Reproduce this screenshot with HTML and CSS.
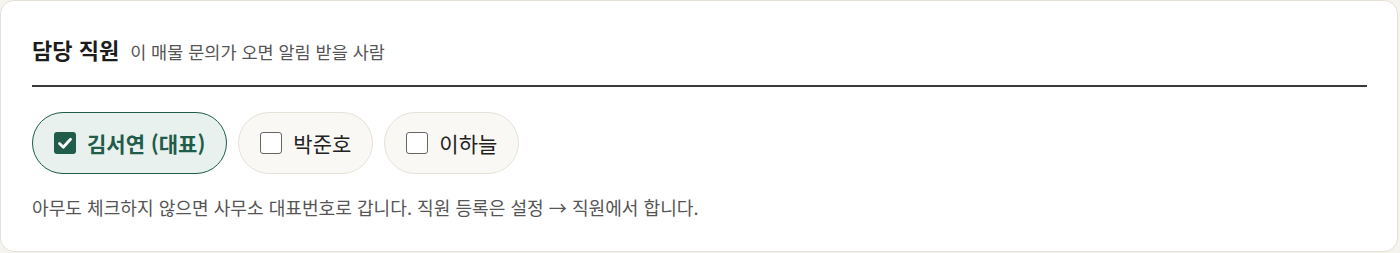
FILE: index.html
```html
<!DOCTYPE html>
<html lang="ko">
<head>
    <meta charset="UTF-8">
    <meta name="viewport" content="width=device-width, initial-scale=1.0">
    <title>담당 직원</title>
    <link rel="stylesheet" href="styles.css">
</head>
<body>

<section class="staff-card">
    <div class="staff-head">
        <h2 class="staff-title">담당 직원</h2>
        <span class="staff-sub">이 매물 문의가 오면 알림 받을 사람</span>
    </div>

    <div class="staff-list">
        <label class="staff-chip checked">
            <span class="box">
                <svg viewBox="0 0 22 22" width="22" height="22"><path d="M5.5 11.5l3.8 3.8 7.2-8" fill="none" stroke="#fff" stroke-width="2.8" stroke-linecap="round" stroke-linejoin="round"/></svg>
            </span>
            <span class="name">김서연 (대표)</span>
        </label>
        <label class="staff-chip">
            <span class="box"></span>
            <span class="name">박준호</span>
        </label>
        <label class="staff-chip">
            <span class="box"></span>
            <span class="name">이하늘</span>
        </label>
    </div>

    <p class="staff-note">아무도 체크하지 않으면 사무소 대표번호로 갑니다. 직원 등록은 설정 → 직원에서 합니다.</p>
</section>

</body>
</html>
```

FILE: styles.css
```css
body {
    margin: 0;
    padding: 0;
    background-color: #f6f4ef;
    font-family: "Noto Sans CJK KR", "Noto Sans", sans-serif;
}

.staff-card {
    box-sizing: border-box;
    width: 1398px;
    height: 252px;
    background-color: #fff;
    border: 1px solid #e4e0d7;
    border-radius: 14px;
    padding: 32px 30px 0 31px;
}

.staff-head {
    display: flex;
    align-items: baseline;
    gap: 11px;
    padding-bottom: 17px;
    border-bottom: 2px solid #3a3a3a;
    line-height: 32px;
}

.staff-title {
    margin: 0;
    font-size: 22px;
    font-weight: 700;
    color: #1c1c1c;
}

.staff-sub {
    font-size: 17.5px;
    color: #555;
}

.staff-list {
    display: flex;
    gap: 11px;
    margin-top: 25px;
}

.staff-chip {
    box-sizing: border-box;
    display: flex;
    align-items: center;
    gap: 11px;
    height: 62px;
    padding: 0 21px 0 21px;
    border: 1px solid #e6e2d9;
    border-radius: 31px;
    background-color: #faf8f5;
    font-size: 21px;
    color: #222;
    cursor: pointer;
}

.staff-chip .box {
    box-sizing: border-box;
    width: 22px;
    height: 22px;
    border: 1.5px solid #666;
    border-radius: 3px;
    background-color: #fff;
}

.staff-chip.checked {
    border: 1.5px solid #1f5c4a;
    background-color: #e9f1ee;
    color: #1f5c4a;
    font-weight: 700;
}

.staff-chip.checked .box {
    border: none;
    background-color: #1f5c4a;
}

.staff-chip .box svg {
    display: block;
}

.staff-note {
    margin: 20px 0 0;
    font-size: 18.1px;
    line-height: 26px;
    color: #555;
}
```
